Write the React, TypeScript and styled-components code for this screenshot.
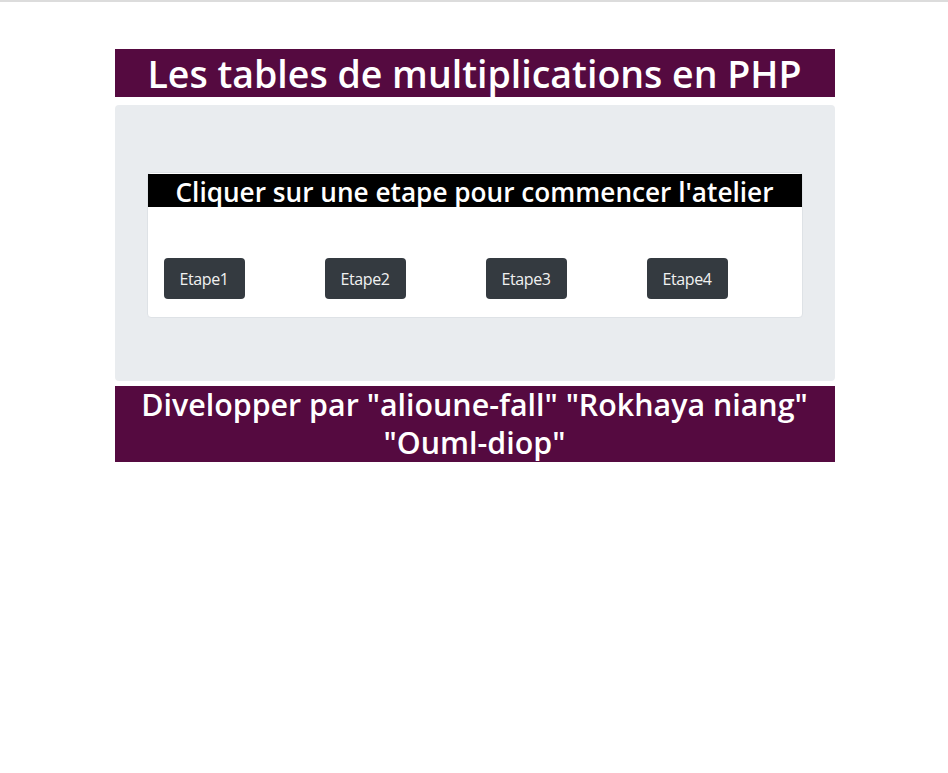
import { createGlobalStyle, styled } from 'styled-components';

const GlobalStyle = createGlobalStyle`
  body {
    margin: 0;
    border-top: 2px solid #dcdcdc;
    font-family: 'Open Sans', 'Noto Sans', sans-serif;
    background: #fff;
  }
`;

const Page = styled.main`
  width: 720px;
  margin: 0 auto;
  padding: 47px 0 0 1px;
`;

const Banner = styled.h1`
  margin: 0;
  height: 48px;
  background-color: #550a40;
  color: #fff;
  font-size: 37.5px;
  font-weight: 600;
  line-height: 50px;
  text-align: center;
  white-space: nowrap;
`;

const Jumbotron = styled.section`
  margin-top: 8px;
  background-color: #e9ecef;
  border-radius: 4px;
  padding: 67px 32px 63px 32px;
`;

const Card = styled.div`
  background-color: #fff;
  border: 1px solid #dee2e6;
  border-radius: 4px;
  padding: 1px 0 18px;
`;

const CardTitle = styled.h2`
  margin: 0;
  height: 33px;
  background-color: #000;
  color: #fff;
  font-size: 26.2px;
  font-weight: 600;
  line-height: 36px;
  text-align: center;
  white-space: nowrap;
`;

const ButtonRow = styled.div`
  display: flex;
  gap: 80px;
  padding: 51px 0 0 16px;
`;

const StepButton = styled.button`
  width: 81px;
  height: 41px;
  padding: 0;
  background-color: #343a40;
  color: #f1f1f1;
  border: none;
  border-radius: 4px;
  font-family: 'Open Sans', 'Noto Sans', sans-serif;
  font-size: 16px;
  letter-spacing: -0.4px;
  cursor: pointer;
`;

const Footer = styled.footer`
  margin-top: 5px;
  background-color: #550a40;
  color: #fff;
  font-size: 30.4px;
  font-weight: 600;
  line-height: 38px;
  text-align: center;
  padding: 0 20px;
`;

const etapes = ['Etape1', 'Etape2', 'Etape3', 'Etape4'];

const App = () => {
  return (
    <>
      <GlobalStyle />
      <Page>
        <Banner>Les tables de multiplications en PHP</Banner>
        <Jumbotron>
          <Card>
            <CardTitle>Cliquer sur une etape pour commencer l'atelier</CardTitle>
            <ButtonRow>
              {etapes.map((e) => (
                <StepButton key={e}>{e}</StepButton>
              ))}
            </ButtonRow>
          </Card>
        </Jumbotron>
        <Footer>Divelopper par "alioune-fall" "Rokhaya niang" "Ouml-diop"</Footer>
      </Page>
    </>
  );
};

export default App;
